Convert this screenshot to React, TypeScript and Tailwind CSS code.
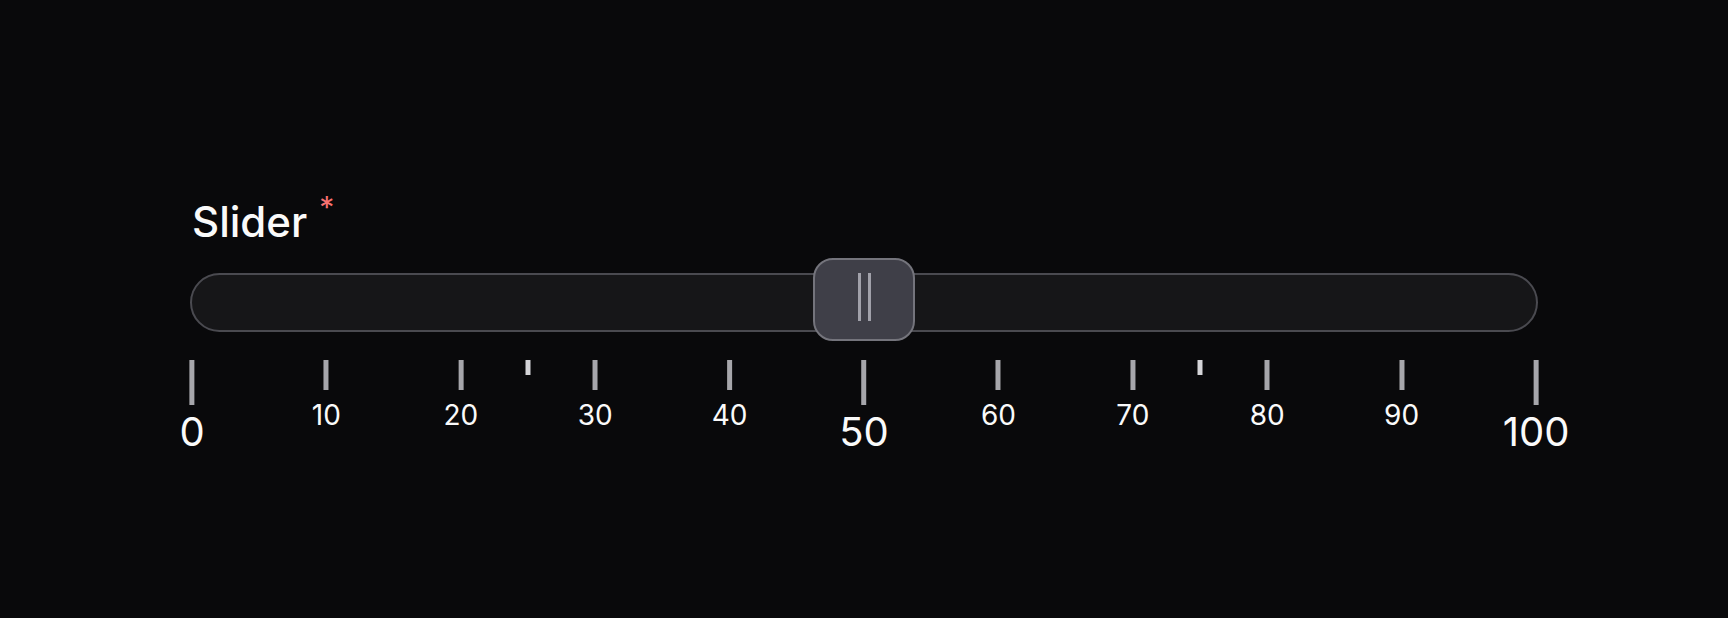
import React from "react";

type Tick = { v: number; kind: "major" | "minor" | "quarter" };

const ticks: Tick[] = [
  { v: 0, kind: "major" },
  { v: 10, kind: "minor" },
  { v: 20, kind: "minor" },
  { v: 25, kind: "quarter" },
  { v: 30, kind: "minor" },
  { v: 40, kind: "minor" },
  { v: 50, kind: "major" },
  { v: 60, kind: "minor" },
  { v: 70, kind: "minor" },
  { v: 75, kind: "quarter" },
  { v: 80, kind: "minor" },
  { v: 90, kind: "minor" },
  { v: 100, kind: "major" },
];

function TickMark({ t }: { t: Tick }) {
  return (
    <div
      className="absolute top-0 flex -translate-x-1/2 flex-col items-center"
      style={{ left: `${t.v}%` }}
    >
      {t.kind === "major" && (
        <>
          <div className="h-[45px] w-[5px] bg-[#a6a6ab]" />
          <span className="mt-[7px] text-[40px] leading-none text-[#fafafa]">{t.v}</span>
        </>
      )}
      {t.kind === "minor" && (
        <>
          <div className="h-[30px] w-[5px] bg-[#a6a6ab]" />
          <span className="mt-[11px] text-[28px] leading-none text-[#fafafa]">{t.v}</span>
        </>
      )}
      {t.kind === "quarter" && <div className="h-[15px] w-[5px] bg-[#d4d4d8]" />}
    </div>
  );
}

export default function App() {
  return (
    <div className="min-h-screen w-full bg-[#09090b] font-[Inter,sans-serif]">
      <div className="px-[190px] pt-[201px]">
        <div className="flex h-[42px] items-start pl-[2px]">
          <span className="text-[42px] leading-none font-medium text-[#fafafa]">Slider</span>
          <span className="-mt-[9px] ml-[12px] text-[30px] leading-none text-[#f87171]">*</span>
        </div>
        <div className="relative mt-[15px] flex h-[83px] flex-col pt-[15px]">
          <div className="h-[59px] rounded-full border-[2.5px] border-[#4a4a50] bg-[#161618]" />
          <div className="absolute top-0 left-1/2 flex h-[83px] w-[102px] -translate-x-1/2 items-center justify-center gap-[7px] rounded-[20px] border-[2.5px] border-[#74747c] bg-[#3f3f48] pb-[5px]">
            <span className="h-[48px] w-[3px] bg-[#a1a1aa]" />
            <span className="h-[48px] w-[3px] bg-[#a1a1aa]" />
          </div>
        </div>
        <div className="relative mx-[2px] mt-[19px] h-[100px]">
          {ticks.map((t) => (
            <TickMark key={t.v} t={t} />
          ))}
        </div>
      </div>
    </div>
  );
}
